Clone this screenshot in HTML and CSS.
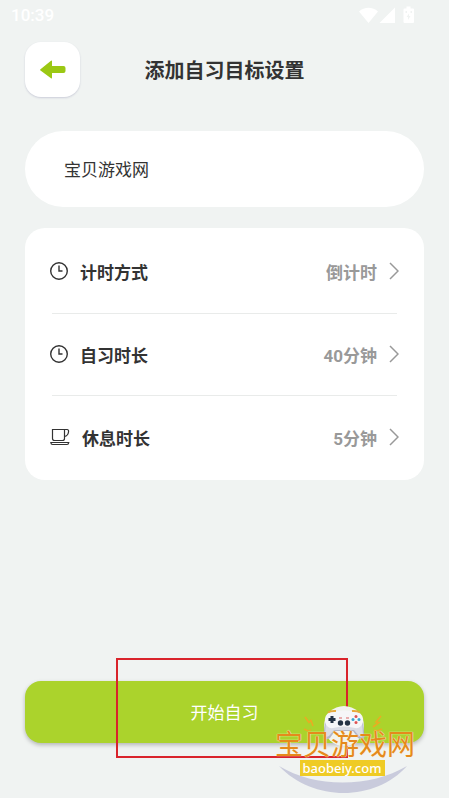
FILE: index.html
```html
<!DOCTYPE html>
<html lang="zh-CN">
<head>
    <meta charset="UTF-8">
    <meta name="viewport" content="width=device-width, initial-scale=1.0">
    <title>添加自习目标设置</title>
    <link rel="stylesheet" href="styles.css">
</head>
<body>
    <div class="status-bar">
        <span class="time">10:39</span>
        <svg class="status-icons" width="56" height="18" viewBox="0 0 56 18" fill="#fff" aria-hidden="true">
            <path d="M0 5.500C5.500 0.500 13.500 0.500 19 5.500L9.500 17Z"/>
            <path d="M36 1.500V17H20.500Z"/>
            <path fill-rule="evenodd" d="M47.500 0.500h4v2h2.500q1 0 1 1v12.500q0 1-1 1h-8.500q-1 0-1-1v-12.500q0-1 1-1h2zM46.500 5v2h1.500v-2zM51.500 5v2h1.500v-2zM50 7.500l-2.500 3.500h1.500v3l2.500-4h-1.500z"/>
        </svg>
    </div>

    <header class="header">
        <button type="button" class="back" aria-label="返回">
            <svg width="26" height="20" viewBox="0 0 26 20" aria-hidden="true">
                <path fill="#9bc814" d="M0.500 9.200L11 0.800Q12 0.200 12 1.500V6H23.500Q25.500 6 25.500 8V11Q25.500 13 23.500 13H12V17.500Q12 19 11 18.200L0.500 10.500Q-0.300 9.900 0.500 9.200Z"/>
            </svg>
        </button>
        <h1>添加自习目标设置</h1>
    </header>

    <main>
        <input type="text" class="goal-name" value="宝贝游戏网" aria-label="目标名称">

        <div class="settings">
            <button type="button" class="row">
                <svg class="icon" width="20" height="20" viewBox="0 0 20 20" aria-hidden="true">
                    <circle cx="9" cy="10" r="8.300"/>
                    <path d="M9 4.500V10H12.500"/>
                </svg>
                <span class="label">计时方式</span>
                <span class="value">倒计时</span>
                <svg class="arrow" width="10" height="18" viewBox="0 0 10 18" aria-hidden="true"><path d="M1 1L9 9L1 17"/></svg>
            </button>
            <button type="button" class="row">
                <svg class="icon" width="20" height="20" viewBox="0 0 20 20" aria-hidden="true">
                    <circle cx="9" cy="10" r="8.300"/>
                    <path d="M9 4.500V10H12.500"/>
                </svg>
                <span class="label">自习时长</span>
                <span class="value">40分钟</span>
                <svg class="arrow" width="10" height="18" viewBox="0 0 10 18" aria-hidden="true"><path d="M1 1L9 9L1 17"/></svg>
            </button>
            <button type="button" class="row">
                <svg class="icon cup" width="20" height="20" viewBox="0 0 20 20" aria-hidden="true">
                    <path d="M2.500 2.500H14.500V11.500Q14.500 13.500 12.500 13.500H4.500Q2.500 13.500 2.500 11.500Z"/>
                    <path d="M14.500 2.500H17Q19 2.800 18.500 5Q18 8.800 14.500 9.500"/>
                    <path d="M0.800 15.500H18.800Q18.500 17.500 17 17.500H2.600Q1 17.500 0.800 15.500Z"/>
                </svg>
                <span class="label">休息时长</span>
                <span class="value">5分钟</span>
                <svg class="arrow" width="10" height="18" viewBox="0 0 10 18" aria-hidden="true"><path d="M1 1L9 9L1 17"/></svg>
            </button>
        </div>
    </main>

    <footer class="footer">
        <button type="button" class="start">开始自习</button>
        <div class="highlight"></div>
    </footer>

    <div class="watermark">
        <svg class="watermark-art" width="140" height="92" viewBox="0 0 140 92" aria-hidden="true">
            <!-- plate -->
            <path fill="#c9cbdc" d="M4 62C40 84 95 84 132 62C100 98 38 98 4 62Z"/>
            <!-- controller -->
            <circle cx="69" cy="22" r="20" fill="#f1f3ee"/>
            <path fill="#b4b7c8" d="M50 17L48.500 33Q50 37 55 34L60 27H78L83 34Q88 37 89.500 33L88 17Z"/>
            <path fill="#dadce5" d="M51 15L50 31Q51 34 54 32L59 26H79L84 32Q87 34 88 31L87 15Z"/>
            <path fill="#f6f6f8" d="M55 8Q69 5 83 8Q89 11 88 18Q86 25 80 24Q69 21 58 24Q52 25 50 18Q49 11 55 8Z"/>
            <path stroke="#e8a93c" stroke-width="2" fill="none" d="M53 8.500Q56 6.500 61 7M77 7Q82 6.500 85 8.500"/>
            <path stroke="#253345" stroke-width="3" d="M57 12V19M53.500 15.500H60.500"/>
            <circle cx="81" cy="12.500" r="1.500" fill="#e05252"/>
            <circle cx="81" cy="18.500" r="1.500" fill="#e05252"/>
            <circle cx="78" cy="15.500" r="1.500" fill="#3aa5d0"/>
            <circle cx="84" cy="15.500" r="1.500" fill="#3aa5d0"/>
            <circle cx="65.500" cy="19" r="2.700" fill="#253345"/>
            <circle cx="72.500" cy="19" r="2.700" fill="#253345"/>
            <path stroke="#d96565" d="M64 14H67M71 14H74"/>
            <!-- sparks -->
            <path stroke="#e9ac22" stroke-width="1.600" fill="none" d="M30 13L34 18.500L36 16.500L38 22M106 12L101 18L104 18.500L98 23M29 25L33 27L36 26M107 25L102 27L99 26"/>
        </svg>
        <span class="watermark-name">宝贝游戏网</span>
        <span class="watermark-url">baobeiy.com</span>
    </div>
</body>
</html>
```

FILE: styles.css
```css
* {
    box-sizing: border-box;
}
body {
    font-family: Roboto, "Noto Sans CJK SC", sans-serif;
    margin: 0;
    background: #f0f3f2;
    color: #333;
    display: flex;
    flex-direction: column;
    min-height: 100vh;
    position: relative;
}
button,
input {
    font-family: inherit;
    color: inherit;
    border: none;
}
button {
    cursor: pointer;
}
.status-bar {
    display: flex;
    justify-content: space-between;
    align-items: center;
    height: 30px;
    padding: 0 34px 0 11px;
    color: #fff;
    font-size: 17px;
    font-weight: 500;
}
.header {
    display: grid;
    grid-template-columns: 55px 1fr 55px;
    align-items: center;
    margin: 12px 25px 0;
}
.back {
    display: flex;
    justify-content: center;
    align-items: center;
    width: 55px;
    height: 55px;
    padding: 0;
    background: #fff;
    border-radius: 16px;
    box-shadow: 0 1px 2px rgba(60, 60, 120, 0.2);
}
.header h1 {
    margin: 0;
    padding-top: 2px;
    font-size: 20px;
    line-height: 28px;
    font-weight: 700;
    text-align: center;
}
main {
    padding: 34px 25px 0;
}
.goal-name {
    display: block;
    width: 100%;
    height: 76px;
    padding: 0 39px 2px;
    background: #fff;
    border-radius: 38px;
    font-size: 17px;
    outline: none;
}
.settings {
    margin-top: 21px;
    padding: 2px 25px 0;
    background: #fff;
    border-radius: 20px;
}
.row {
    display: flex;
    align-items: center;
    width: 100%;
    height: 84px;
    padding: 0 0 2px;
    background: linear-gradient(#e9ebea, #e9ebea) no-repeat 2px 100% / calc(100% - 4px) 1px;
    font-size: 17px;
    font-weight: 700;
    text-align: left;
}
.row:nth-child(2) {
    height: 82px;
}
.row:last-child {
    background: none;
}
.icon {
    fill: none;
    stroke: #333;
    stroke-width: 1.4;
    margin-right: 10px;
}
.cup {
    stroke-width: 1.2;
    margin-right: 12px;
}
.label {
    flex: 1;
}
.value {
    color: #999;
}
.arrow {
    fill: none;
    stroke: #999;
    stroke-width: 1.5;
    margin-left: 12px;
}
.footer {
    position: relative;
    margin: auto 25px 55px;
}
.start {
    display: block;
    width: 100%;
    height: 62px;
    padding-bottom: 3px;
    background: #abd32c;
    border-radius: 16px;
    box-shadow: 0 2px 4px rgba(0, 0, 0, 0.25);
    color: #fff;
    font-size: 17px;
    font-weight: 400;
}
/* frame around the start button */
.highlight {
    position: absolute;
    top: -23px;
    bottom: -15px;
    left: 91px;
    right: 76px;
    border: 2px solid #d9232b;
    pointer-events: none;
}
.watermark {
    position: absolute;
    right: 34px;
    bottom: 2px;
    width: 140px;
    height: 92px;
    display: flex;
    flex-direction: column;
    align-items: center;
    pointer-events: none;
}
.watermark-art {
    position: absolute;
    top: 0;
    left: 0;
}
.watermark-name {
    position: relative;
    margin-top: 28px;
    color: #e58a1c;
    font-size: 28px;
    line-height: 28px;
    white-space: nowrap;
    text-shadow: 0 0 1px #fff3d0, 0 0 1px #fff3d0;
}
.watermark-url {
    position: relative;
    margin-right: 6px;
    padding: 0 3px;
    background: #efcb25;
    color: #fff;
    font-family: "Noto Sans", sans-serif;
    font-size: 13px;
    line-height: 16px;
    font-weight: 500;
}
```
